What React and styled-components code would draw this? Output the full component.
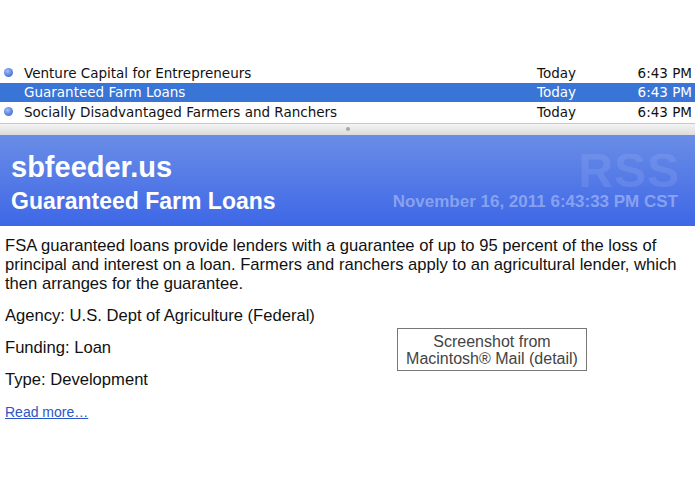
import React from 'react';
import styled, { createGlobalStyle } from 'styled-components';

const GlobalStyle = createGlobalStyle`
    html, body {
        margin: 0;
        padding: 0;
        background: #fff;
    }
`;

/* message list */
const Page = styled.div`
    width: 695px;
    height: 494px;
    overflow: hidden;
    padding-top: 63px;
    box-sizing: border-box;
`;

const List = styled.div`
    display: flex;
    flex-direction: column;
`;

const Row = styled.div`
    display: grid;
    grid-template-columns: 24px 513px 1fr auto;
    align-items: center;
    height: 19.5px;
    font-family: "DejaVu Sans", "Liberation Sans", sans-serif;
    font-size: 13.5px;
    color: ${(p) => (p.$selected ? '#fff' : '#111')};
    background: ${(p) => (p.$selected ? '#3875d7' : 'transparent')};
`;

const Dot = styled.span`
    width: 9px;
    height: 9px;
    margin-left: 4px;
    border-radius: 50%;
    background: radial-gradient(circle at 40% 35%, #a9c0f5 0%, #5b82e0 55%, #3a5fc4 100%);
    visibility: ${(p) => (p.$hidden ? 'hidden' : 'visible')};
`;

const Subject = styled.span`
    white-space: nowrap;
`;

const Day = styled.span``;

const Time = styled.span`
    text-align: right;
    padding-right: 3px;
`;

const Splitter = styled.div`
    height: 11px;
    margin-top: 1px;
    border-top: 1px solid #c8c8c8;
    background: linear-gradient(#f4f4f4, #dcdcdc);
    display: flex;
    justify-content: center;
    align-items: center;
`;

const Grip = styled.span`
    width: 4px;
    height: 4px;
    border-radius: 50%;
    background: #a8a8a8;
`;

/* feed header */
const Banner = styled.div`
    height: 91px;
    background: linear-gradient(#6a8de6, #3e67e6);
    color: #fff;
    font-family: "Liberation Sans", Arial, sans-serif;
    font-weight: bold;
    display: grid;
    grid-template-columns: 1fr auto;
    padding: 0 17px 0 11px;
    overflow: hidden;
`;

const Titles = styled.div`
    display: flex;
    flex-direction: column;
    padding-top: 15px;
`;

const Site = styled.div`
    font-size: 29px;
    line-height: 34px;
`;

const Headline = styled.div`
    font-size: 23px;
    line-height: 28px;
    margin-top: 3px;
`;

const Stamp = styled.div`
    display: flex;
    flex-direction: column;
    align-items: flex-end;
    color: rgba(190, 205, 250, 0.55);
`;

const Watermark = styled.div`
    font-size: 48px;
    line-height: 48px;
    margin-top: 12px;
    margin-right: -2px;
    letter-spacing: 1px;
    color: rgba(160, 180, 245, 0.22);
`;

const Date = styled.div`
    font-size: 17px;
    line-height: 20px;
    margin-top: -3px;
`;

/* article body */
const Body = styled.div`
    padding: 10px 5px 0;
    font-family: "Liberation Sans", Arial, sans-serif;
    font-size: 16.6px;
    line-height: 19px;
    color: #111;
`;

const Para = styled.p`
    margin: 0 0 13px;
`;

const Details = styled.div`
    display: grid;
    grid-template-columns: 392px 190px;
    align-items: center;
`;

const Fields = styled.div`
    display: flex;
    flex-direction: column;
`;

const Note = styled.div`
    border: 1px solid #777;
    height: 41px;
    display: flex;
    flex-direction: column;
    justify-content: center;
    align-items: center;
    font-size: 16px;
    line-height: 17px;
    color: #444;
    margin-top: -8px;
`;

const More = styled.a`
    font-size: 14px;
    color: #2a56c6;
    text-decoration: underline;
`;

const messages = [
    { subject: 'Venture Capital for Entrepreneurs', unread: true },
    { subject: 'Guaranteed Farm Loans', selected: true },
    { subject: 'Socially Disadvantaged Farmers and Ranchers', unread: true },
];

const App = () => {
    return (
        <Page>
            <GlobalStyle />
            <List>
                {messages.map((m) => (
                    <Row key={m.subject} $selected={m.selected}>
                        <Dot $hidden={!m.unread} />
                        <Subject>{m.subject}</Subject>
                        <Day>Today</Day>
                        <Time>6:43 PM</Time>
                    </Row>
                ))}
            </List>
            <Splitter>
                <Grip />
            </Splitter>
            <Banner>
                <Titles>
                    <Site>sbfeeder.us</Site>
                    <Headline>Guaranteed Farm Loans</Headline>
                </Titles>
                <Stamp>
                    <Watermark>RSS</Watermark>
                    <Date>November 16, 2011 6:43:33 PM CST</Date>
                </Stamp>
            </Banner>
            <Body>
                <Para>
                    FSA guaranteed loans provide lenders with a guarantee of up to 95 percent of the
                    loss of principal and interest on a loan. Farmers and ranchers apply to an
                    agricultural lender, which then arranges for the guarantee.
                </Para>
                <Details>
                    <Fields>
                        <Para>Agency: U.S. Dept of Agriculture (Federal)</Para>
                        <Para>Funding: Loan</Para>
                        <Para>Type: Development</Para>
                    </Fields>
                    <Note>
                        <span>Screenshot from</span>
                        <span>Macintosh® Mail (detail)</span>
                    </Note>
                </Details>
                <More href="#">Read more…</More>
            </Body>
        </Page>
    );
};

export default App;
